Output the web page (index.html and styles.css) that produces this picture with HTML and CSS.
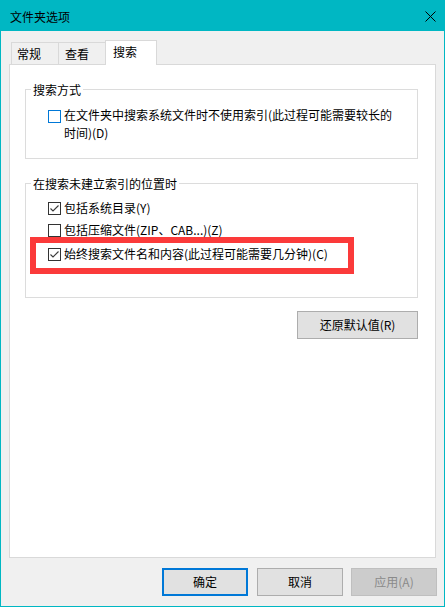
FILE: index.html
```html
<!DOCTYPE html>
<html lang="zh-CN">
<head>
<meta charset="utf-8">
<title>文件夹选项</title>
<link rel="stylesheet" href="styles.css">
</head>
<body>
<div class="window">
  <div class="titlebar">
    <span class="title">文件夹选项</span>
    <svg class="close" width="11" height="11" viewBox="0 0 11 11"><path d="M0.5 0.5 L10.5 10.5 M10.5 0.5 L0.5 10.5" stroke="#000" stroke-width="1" fill="none"/></svg>
  </div>
  <div class="client">
    <div class="tabs">
      <div class="tab tab-a">常规</div>
      <div class="tab tab-b">查看</div>
      <div class="tab tab-active">搜索</div>
    </div>
    <div class="panel">
      <fieldset class="group group-1">
        <legend>搜索方式</legend>
        <label class="cb-row row-first">
          <span class="box box-focus box-low"></span>
          <span class="lbl lbl-wrap">在文件夹中搜索系统文件时不使用索引(此过程可能需要较长的时间)(D)</span>
        </label>
      </fieldset>
      <fieldset class="group group-2">
        <legend>在搜索未建立索引的位置时</legend>
        <label class="cb-row row-g2a">
          <span class="box"><svg width="11" height="11" viewBox="0 0 11 11"><polyline points="1.5,5.5 4,8 9.5,2.5" fill="none" stroke="#3a3a3a" stroke-width="1.1"/></svg></span>
          <span class="lbl">包括系统目录(Y)</span>
        </label>
        <label class="cb-row row-g2b">
          <span class="box"></span>
          <span class="lbl">包括压缩文件(ZIP、CAB...)(Z)</span>
        </label>
        <div class="highlight">
          <label class="cb-row">
            <span class="box"><svg width="11" height="11" viewBox="0 0 11 11"><polyline points="1.5,5.5 4,8 9.5,2.5" fill="none" stroke="#3a3a3a" stroke-width="1.1"/></svg></span>
            <span class="lbl">始终搜索文件名和内容(此过程可能需要几分钟)(C)</span>
          </label>
        </div>
      </fieldset>
      <div class="restore-row">
        <button class="btn btn-restore">还原默认值(R)</button>
      </div>
    </div>
    <div class="footer">
      <button class="btn btn-default">确定</button>
      <button class="btn btn-cancel">取消</button>
      <button class="btn btn-disabled">应用(A)</button>
    </div>
  </div>
</div>
</body>
</html>
```
FILE: styles.css
```css
* { box-sizing: border-box; }
html, body {
  margin: 0;
  padding: 0;
  background: #f0f0f0;
}
body {
  font-family: "Noto Sans CJK SC", "Microsoft YaHei", sans-serif;
  font-size: 12px;
  color: #000;
}
.window {
  width: 445px;
  height: 607px;
  border: 1px solid #00b7c3;
  background: #f0f0f0;
  display: flex;
  flex-direction: column;
}
.titlebar {
  height: 30px;
  background: #00b7c3;
  display: flex;
  align-items: center;
  padding-left: 9px;
  padding-right: 8px;
  flex: none;
}
.title {
  font-size: 12px;
  line-height: 16px;
  margin-top: 1px;
}
.close {
  margin-left: auto;
  display: block;
}
.client {
  padding: 0 7px 0 8px;
}
.tabs {
  margin-top: 9px;
  height: 24px;
  display: flex;
  align-items: flex-end;
  padding-left: 2px;
}
.tab {
  height: 22px;
  border-top: 1px solid #d9d9d9;
  border-left: 1px solid #d9d9d9;
  background: #f0f0f0;
  display: flex;
  align-items: center;
  line-height: 16px;
}
.tab-a { width: 47px; padding-left: 5px; }
.tab-b { width: 47px; padding-left: 6px; }
.tab-active {
  width: 52px;
  height: 25px;
  margin-bottom: -1px;
  padding-left: 7px;
  padding-bottom: 3px;
  background: #fff;
  border-right: 1px solid #d9d9d9;
  position: relative;
  z-index: 1;
}
.panel {
  width: 427px;
  height: 494px;
  background: #fff;
  border: 1px solid #d9d9d9;
  padding: 16px 17px 0 15px;
}
.group {
  margin: 0;
  padding: 0;
  border: 1px solid #dcdcdc;
  min-width: 0;
}
.group legend {
  padding: 0 2px;
  margin-left: 5px;
  font-size: 12px;
  line-height: 17px;
  height: 17px;
}
.group-1 { height: 78px; }
.group-2 { height: 123px; margin-top: 16px; }
.cb-row {
  display: flex;
  align-items: flex-start;
  margin-left: 22px;
  line-height: 18px;
}
.row-first { margin-top: 8px; }
.row-g2a { margin-top: 7px; }
.row-g2b { margin-top: 4px; }
.box {
  flex: none;
  width: 13px;
  height: 13px;
  border: 1px solid #333;
  background: #fff;
  margin-top: 3px;
  margin-right: 3px;
  display: flex;
}
.box svg { display: block; }
.box-low { margin-top: 4px; }
.box-focus { border-color: #0078d7; }
.lbl-wrap { max-width: 335px; }
.highlight {
  margin-top: -2px;
  margin-left: 4px;
  width: 324px;
  border: 6px solid #fb3a3a;
  padding: 2px 0 5px 12px;
}
.highlight .cb-row { margin-left: 0; }
.restore-row {
  display: flex;
  justify-content: flex-end;
  margin-top: 13px;
}
.btn {
  font-family: "Noto Sans CJK SC", "Microsoft YaHei", sans-serif;
  font-size: 12px;
  color: #000;
  height: 28px;
  width: 86px;
  padding: 0;
  margin: 0;
  background: #e1e1e1;
  border: 1px solid #adadad;
  border-radius: 0;
  line-height: 16px;
}
.btn-restore { width: 121px; }
.footer {
  display: flex;
  justify-content: flex-end;
  margin-top: 10px;
}
.btn-default { border: 2px solid #0078d7; }
.btn-cancel { margin-left: 9px; }
.btn-disabled {
  margin-left: 8px;
  background: #cccccc;
  border-color: #bfbfbf;
  color: #8a8a8a;
}
```
